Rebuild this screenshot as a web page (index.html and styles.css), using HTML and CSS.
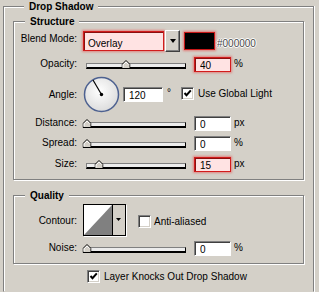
FILE: index.html
```html
<!DOCTYPE html>
<html lang="en">
<head>
  <meta charset="UTF-8">
  <meta name="viewport" content="width=device-width, initial-scale=1.0">
  <title>Drop Shadow</title>
  <link rel="stylesheet" href="styles.css">
</head>
<body>
  <fieldset class="panel">
    <legend>Drop Shadow</legend>

    <fieldset class="group structure">
      <legend>Structure</legend>

      <div class="row row-blend">
        <span class="label">Blend Mode:</span>
        <div class="select">
          <span class="select-value">Overlay</span>
          <span class="select-arrow"><span class="arrow"></span></span>
        </div>
        <span class="swatch"></span>
        <span class="hex">#000000</span>
      </div>

      <div class="row row-opacity">
        <span class="label">Opacity:</span>
        <div class="slider">
          <svg class="thumb" style="left: 40%" width="9" height="9" viewBox="0 0 9 9"><path d="M0.5 8.5V4.5L4.5 0.5L8.5 4.5V8.5Z" fill="#d4d0c8" stroke="#000"/><path d="M1.5 7.5V4.9L4.5 1.9L7 4.4" fill="none" stroke="#fff"/></svg>
        </div>
        <input class="field hot" type="text" value="40">
        <span class="unit">%</span>
      </div>

      <div class="row row-angle">
        <span class="label">Angle:</span>
        <svg class="dial" width="37" height="37" viewBox="0 0 37 37">
          <defs>
            <radialGradient id="dialFill" cx="45%" cy="40%" r="60%">
              <stop offset="0" stop-color="#ffffff"/>
              <stop offset="1" stop-color="#dcdcdc"/>
            </radialGradient>
          </defs>
          <circle cx="18.5" cy="18.5" r="17" fill="url(#dialFill)" stroke="#4d6190" stroke-width="1.5"/>
          <line x1="18.5" y1="18.5" x2="10" y2="4" stroke="#000" stroke-width="1.2"/>
          <circle cx="18.5" cy="18.5" r="1.7" fill="#000"/>
        </svg>
        <input class="field field-angle" type="text" value="120">
        <span class="unit degree">°</span>
        <span class="check check-light">
          <span class="box"><svg width="11" height="11" viewBox="0 0 11 11"><path d="M2.5 5L4.5 7.2L8.8 2.4" fill="none" stroke="#000" stroke-width="2"/></svg></span>
          Use Global Light
        </span>
      </div>

      <div class="row row-distance">
        <span class="label">Distance:</span>
        <div class="slider">
          <svg class="thumb" style="left: 0%" width="9" height="9" viewBox="0 0 9 9"><path d="M0.5 8.5V4.5L4.5 0.5L8.5 4.5V8.5Z" fill="#d4d0c8" stroke="#000"/><path d="M1.5 7.5V4.9L4.5 1.9L7 4.4" fill="none" stroke="#fff"/></svg>
        </div>
        <input class="field" type="text" value="0">
        <span class="unit">px</span>
      </div>

      <div class="row row-spread">
        <span class="label">Spread:</span>
        <div class="slider">
          <svg class="thumb" style="left: 0%" width="9" height="9" viewBox="0 0 9 9"><path d="M0.5 8.5V4.5L4.5 0.5L8.5 4.5V8.5Z" fill="#d4d0c8" stroke="#000"/><path d="M1.5 7.5V4.9L4.5 1.9L7 4.4" fill="none" stroke="#fff"/></svg>
        </div>
        <input class="field" type="text" value="0">
        <span class="unit">%</span>
      </div>

      <div class="row row-size">
        <span class="label">Size:</span>
        <div class="slider">
          <svg class="thumb" style="left: 12%" width="9" height="9" viewBox="0 0 9 9"><path d="M0.5 8.5V4.5L4.5 0.5L8.5 4.5V8.5Z" fill="#d4d0c8" stroke="#000"/><path d="M1.5 7.5V4.9L4.5 1.9L7 4.4" fill="none" stroke="#fff"/></svg>
        </div>
        <input class="field hot" type="text" value="15">
        <span class="unit">px</span>
      </div>
    </fieldset>

    <fieldset class="group quality">
      <legend>Quality</legend>

      <div class="row row-contour">
        <span class="label">Contour:</span>
        <svg class="contour" width="43" height="32" viewBox="0 0 43 32">
          <rect x="0.5" y="0.5" width="42" height="31" fill="#fff" stroke="#000"/>
          <polygon points="1,31 29,1 29,31" fill="#808080"/>
          <rect x="30" y="1" width="12" height="30" fill="#d4d0c8"/>
          <line x1="29.5" y1="1" x2="29.5" y2="31" stroke="#000"/>
          <polygon points="33,14 38,14 35.5,17" fill="#000"/>
        </svg>
        <span class="check check-alias">
          <span class="box"></span>
          Anti-aliased
        </span>
      </div>

      <div class="row row-noise">
        <span class="label">Noise:</span>
        <div class="slider">
          <svg class="thumb" style="left: 0%" width="9" height="9" viewBox="0 0 9 9"><path d="M0.5 8.5V4.5L4.5 0.5L8.5 4.5V8.5Z" fill="#d4d0c8" stroke="#000"/><path d="M1.5 7.5V4.9L4.5 1.9L7 4.4" fill="none" stroke="#fff"/></svg>
        </div>
        <input class="field" type="text" value="0">
        <span class="unit">%</span>
      </div>
    </fieldset>

    <div class="row row-knock">
      <span class="check">
        <span class="box"><svg width="11" height="11" viewBox="0 0 11 11"><path d="M2.5 5L4.5 7.2L8.8 2.4" fill="none" stroke="#000" stroke-width="2"/></svg></span>
        Layer Knocks Out Drop Shadow
      </span>
    </div>
  </fieldset>
</body>
</html>
```

FILE: styles.css
```css
body {
  margin: 0;
  width: 319px;
  height: 292px;
  overflow: hidden;
  background-color: #d4d0c8;
  font-family: "Liberation Sans", Arial, sans-serif;
  font-size: 10px;
  color: #000;
}
fieldset {
  box-sizing: border-box;
  min-width: 0;
  margin: 0;
  padding: 0;
  border: 1px solid #808080;
  box-shadow: 1px 1px 0 #fff, inset 1px 1px 0 #fff;
}
legend {
  margin-left: 11px;
  padding: 0 5px;
  font-weight: bold;
  line-height: 13px;
  background-color: #d4d0c8;
}
.panel {
  width: 311px;
  height: 292px;
  margin-left: 3px;
  padding: 0 0 0 9px;
  border-bottom-color: transparent;
  box-shadow: 1px 0 0 #fff, inset 1px 1px 0 #fff;
}
.group {
  width: 291px;
  padding: 0 0 7px;
}
.structure {
  margin-top: 2px;
}
.quality {
  margin-top: 9px;
}
.row {
  display: flex;
  align-items: flex-start;
  height: 15px;
}
.label {
  width: 63px;
  margin-right: 6px;
  text-align: right;
  line-height: 13px;
  white-space: nowrap;
}
.unit {
  margin-left: 3px;
  line-height: 13px;
}

/* blend mode row */
.row-blend {
  height: 22px;
  margin-top: 2px;
}
.row-blend .label {
  margin-top: 2px;
}
.select {
  box-sizing: border-box;
  display: flex;
  width: 97px;
  height: 22px;
}
.select-value {
  box-sizing: border-box;
  flex: 1;
  margin: 1px 1px 1px 0;
  padding: 5px 0 0 4px;
  line-height: 13px;
  background-color: #ffe3e3;
  border: 1px solid #d21c1c;
  box-shadow: 0 0 2px 1px rgba(235, 60, 60, 0.5), inset 1px 1px 0 #8a1010;
}
.select-arrow {
  box-sizing: border-box;
  display: flex;
  align-items: center;
  justify-content: center;
  width: 15px;
  height: 22px;
  background-color: #d4d0c8;
  border: 1px solid;
  border-color: #fff #404040 #404040 #fff;
  box-shadow: inset -1px -1px 0 #808080;
}
.arrow {
  width: 0;
  height: 0;
  border-left: 3.5px solid transparent;
  border-right: 3.5px solid transparent;
  border-top: 4px solid #000;
}
.swatch {
  box-sizing: border-box;
  width: 31px;
  height: 18px;
  margin: 2px 0 0 4px;
  background-color: #000;
  border: 1px solid #c81818;
  box-shadow: 0 0 2px 1px rgba(235, 60, 60, 0.55);
}
.hex {
  margin: 7px 0 0 2px;
  line-height: 13px;
  color: #4a4a4a;
  text-shadow: 1px 0 0 #fff, -1px 0 0 #fff, 0 1px 0 #fff, 0 -1px 0 #fff;
}

/* slider + fields */
.slider {
  position: relative;
  box-sizing: border-box;
  width: 100px;
  height: 6px;
  margin: 6px 0 0 3px;
  background-color: #ececec;
  border: 1px solid #000;
  border-top-color: #808080;
  border-left-color: #808080;
  border-bottom-width: 2px;
}
.thumb {
  position: absolute;
  bottom: -2px;
  transform: translateX(-50%);
}
.field {
  box-sizing: border-box;
  width: 37px;
  height: 15px;
  margin: 0 0 0 8px;
  padding: 1px 0 0 5px;
  font-family: "Liberation Sans", Arial, sans-serif;
  font-size: 10px;
  color: #000;
  background-color: #fff;
  border: 1px solid;
  border-color: #808080 #fff #fff #808080;
  box-shadow: inset 1px 1px 0 #404040;
  outline: none;
}
.field.hot {
  background-color: #ffe3e3;
  border-color: #d21c1c;
  box-shadow: 0 0 2px 1px rgba(235, 60, 60, 0.5), inset 1px 1px 0 #8a1010;
}
.row-opacity {
  margin-top: 5px;
}

/* angle row */
.row-angle {
  height: 37px;
  margin-top: 4px;
  align-items: center;
}
.dial {
  display: block;
}
.field-angle {
  width: 40px;
  margin-left: 3px;
}
.degree {
  align-self: flex-start;
  margin: 10px 0 0 4px;
}
.check {
  display: flex;
  align-items: center;
  line-height: 13px;
  white-space: nowrap;
}
.box {
  box-sizing: border-box;
  display: flex;
  align-items: center;
  justify-content: center;
  width: 13px;
  height: 13px;
  margin-right: 4px;
  background-color: #fff;
  border: 1px solid;
  border-color: #808080 #fff #fff #808080;
  box-shadow: inset 1px 1px 0 #404040, inset -1px -1px 0 #d4d0c8;
}
.check-light {
  margin: -2px 0 0 10px;
}

.row-distance {
  margin-top: 3px;
}
.row-spread {
  margin-top: 5px;
}
.row-size {
  margin-top: 6px;
}

/* quality */
.row-contour {
  height: 32px;
  margin-top: 2px;
  align-items: center;
}
.contour {
  display: block;
  box-shadow: 1px 1px 0 #fff;
}
.check-alias {
  margin: 2px 0 0 12px;
}
.check-alias .box {
  margin-right: 3px;
}
.row-noise {
  margin-top: 5px;
}
.row-knock {
  height: 13px;
  margin: 6px 0 0 74px;
}
```
